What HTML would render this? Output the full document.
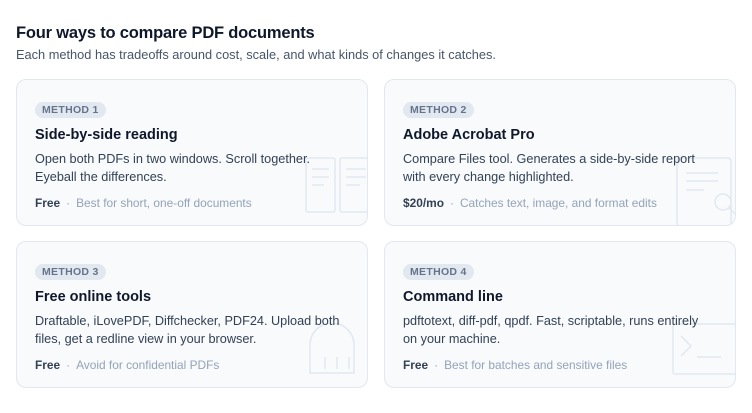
<!DOCTYPE html>
<html><head><style>
*{margin:0;padding:0;box-sizing:border-box}
body{width:752px;height:413px;background:#fff;font-family:"Liberation Sans",sans-serif;color:#0f172a;position:relative;overflow:hidden}
h1{position:absolute;left:16px;top:24px;font-size:16.5px;font-weight:700;letter-spacing:-0.2px}
.sub{position:absolute;left:16px;top:47px;font-size:12.8px;color:#475569}
.card{position:absolute;width:352px;height:147px;background:#f8fafc;border:1px solid #e2e8f0;border-radius:10px;overflow:hidden}
.badge{position:absolute;left:18px;top:22px;height:16px;padding:0 7px;border-radius:8px;background:#e2e8f0;color:#64748b;font-size:10.5px;font-weight:700;line-height:16px;letter-spacing:0.3px}
.t{position:absolute;left:18px;top:47px;font-size:14.5px;font-weight:700;color:#0f172a}
.d{position:absolute;left:18px;top:70px;font-size:12.7px;line-height:18px;color:#334155;width:320px}
.f{position:absolute;left:18px;top:116px;font-size:11.9px;color:#94a3b8}
.f b{color:#334155;font-weight:700;margin-right:6px}
.f i{font-style:normal;margin-right:6px}
svg{position:absolute}
</style></head><body>
<h1>Four ways to compare PDF documents</h1>
<div class="sub">Each method has tradeoffs around cost, scale, and what kinds of changes it catches.</div>

<div class="card" style="left:16px;top:79px">
<svg style="left:288px;top:77px" width="70" height="60" fill="none" stroke="#e2e8f0" stroke-width="1.5"><rect x="1" y="1" width="29" height="54" rx="2"/><rect x="35" y="1" width="32" height="54" rx="2"/><path d="M7 12h17M7 20h17M7 28h12M41 12h20M41 20h20M41 28h14"/></svg>
<div class="badge">METHOD 1</div><div class="t">Side-by-side reading</div>
<div class="d">Open both PDFs in two windows. Scroll together.<br>Eyeball the differences.</div>
<div class="f"><b>Free</b><i>·</i>Best for short, one-off documents</div></div>

<div class="card" style="left:384px;top:79px">
<svg style="left:291px;top:77px" width="62" height="72" fill="none" stroke="#e2e8f0" stroke-width="1.5"><rect x="1" y="1" width="54" height="68" rx="3"/><path d="M10 16h32M10 24h32M10 33h18"/><circle cx="47" cy="45" r="8"/><path d="M53 51l7 7"/></svg>
<div class="badge">METHOD 2</div><div class="t">Adobe Acrobat Pro</div>
<div class="d">Compare Files tool. Generates a side-by-side report<br>with every change highlighted.</div>
<div class="f"><b>$20/mo</b><i>·</i>Catches text, image, and format edits</div></div>

<div class="card" style="left:16px;top:241px">
<svg style="left:292px;top:81px" width="50" height="52" fill="none" stroke="#e2e8f0" stroke-width="1.5"><path d="M1 50V22A22 22 0 0 1 45 22V50Z"/><path d="M16 34v12M28 34v12M40 34v12"/></svg>
<div class="badge">METHOD 3</div><div class="t">Free online tools</div>
<div class="d">Draftable, iLovePDF, Diffchecker, PDF24. Upload both<br>files, get a redline view in your browser.</div>
<div class="f"><b>Free</b><i>·</i>Avoid for confidential PDFs</div></div>

<div class="card" style="left:384px;top:241px">
<svg style="left:287px;top:81px" width="70" height="54" fill="none" stroke="#e2e8f0" stroke-width="1.5"><rect x="1" y="1" width="66" height="50" rx="2"/><path d="M9 13l10 10-10 10M25 34h24"/></svg>
<div class="badge">METHOD 4</div><div class="t">Command line</div>
<div class="d">pdftotext, diff-pdf, qpdf. Fast, scriptable, runs entirely<br>on your machine.</div>
<div class="f"><b>Free</b><i>·</i>Best for batches and sensitive files</div></div>
</body></html>
